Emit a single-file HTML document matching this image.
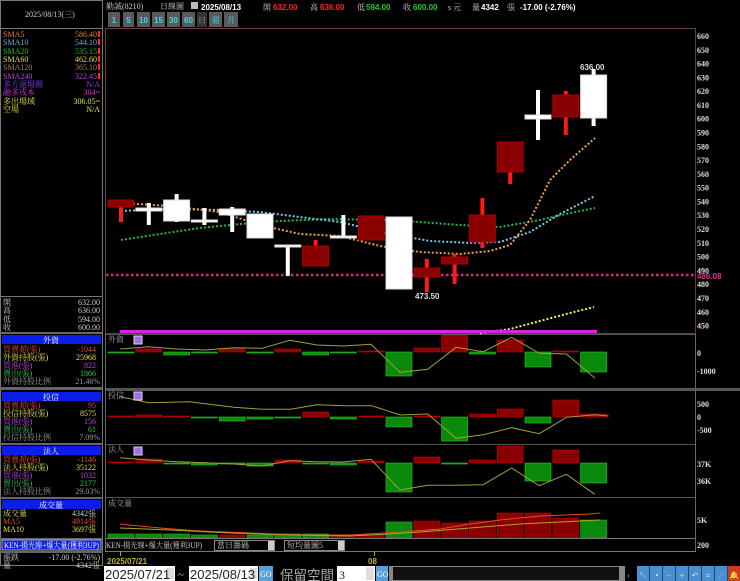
<!DOCTYPE html>
<html><head><meta charset="utf-8"><style>
html,body{margin:0;padding:0;background:#000;width:740px;height:581px;overflow:hidden}
svg{display:block}
text{font-family:"Liberation Serif","Noto Serif CJK SC",serif;font-size:8px}
.b{font-family:"Liberation Sans","Noto Sans CJK TC",sans-serif;font-weight:bold}
</style></head><body>
<svg id="s" width="740" height="581" viewBox="0 0 740 581" xmlns="http://www.w3.org/2000/svg">
<rect width="740" height="581" fill="#000"/>
<rect x="0.5" y="0.5" width="102" height="565" fill="none" stroke="#777"/>
<line x1="0" y1="28.5" x2="103" y2="28.5" stroke="#777"/>
<text x="25" y="17" fill="#ccc" font-size="9">2025/08/13(三)</text>
<g>
<text x="3" y="37" fill="#e08030">SMA5</text><text x="97" y="37" fill="#e08030" text-anchor="end">586.40</text>
<text x="3" y="45" fill="#6ab0e0">SMA10</text><text x="97" y="45" fill="#6ab0e0" text-anchor="end">544.10</text>
<text x="3" y="54" fill="#20c020">SMA20</text><text x="97" y="54" fill="#20c020" text-anchor="end">535.15</text>
<text x="3" y="62" fill="#e0e040">SMA60</text><text x="97" y="62" fill="#e0e040" text-anchor="end">462.60</text>
<text x="3" y="70" fill="#a08060">SMA120</text><text x="97" y="70" fill="#a08060" text-anchor="end">365.10</text>
<text x="3" y="79" fill="#c040e0">SMA240</text><text x="97" y="79" fill="#c040e0" text-anchor="end">322.45</text>
<text x="3" y="87" fill="#8040ff" font-size="7.5">多方迴場圈</text><text x="100" y="87" fill="#8040ff" text-anchor="end">N/A</text>
<text x="3" y="95" fill="#e030e0" font-size="7.5">融多成本</text><text x="100" y="95" fill="#e030e0" text-anchor="end">304=</text>
<text x="3" y="104" fill="#e0e040" font-size="7.5">多出場域</text><text x="100" y="104" fill="#e0e040" text-anchor="end">306.05=</text>
<text x="3" y="112" fill="#e0e040" font-size="7.5">空場</text><text x="100" y="112" fill="#e0e040" text-anchor="end">N/A</text>
<g fill="#f22"><rect x="98" y="31" width="2" height="6"/><rect x="98" y="39" width="2" height="6"/><rect x="98" y="48" width="2" height="6"/><rect x="98" y="56" width="2" height="6"/><rect x="98" y="64" width="2" height="6"/><rect x="98" y="73" width="2" height="6"/></g>
</g>
<line x1="0" y1="296.5" x2="103" y2="296.5" stroke="#777"/>
<text x="3" y="305" fill="#ccc">開</text><text x="100" y="305" fill="#ccc" text-anchor="end">632.00</text>
<text x="3" y="313" fill="#ccc">高</text><text x="100" y="313" fill="#ccc" text-anchor="end">636.00</text>
<text x="3" y="322" fill="#ccc">低</text><text x="100" y="322" fill="#ccc" text-anchor="end">594.00</text>
<text x="3" y="330" fill="#ccc">收</text><text x="100" y="330" fill="#ccc" text-anchor="end">600.00</text>
<rect x="0" y="332" width="103" height="2" fill="#666"/>
<rect x="2" y="335" width="99" height="9" fill="#0a1ee8"/><text x="51" y="343" fill="#fff" text-anchor="middle">外資</text>
<text x="3" y="352" fill="#e05030" font-size="7.5">買賣超(張)</text><text x="96" y="352" fill="#e05030" text-anchor="end">-1044</text>
<text x="3" y="360" fill="#e0e040" font-size="7.5">外資持股(張)</text><text x="96" y="360" fill="#e0e040" text-anchor="end">25968</text>
<text x="3" y="368" fill="#c040e0" font-size="7.5">買進(張)</text><text x="96" y="368" fill="#c040e0" text-anchor="end">822</text>
<text x="3" y="376" fill="#30c060" font-size="7.5">賣出(張)</text><text x="96" y="376" fill="#30c060" text-anchor="end">1866</text>
<text x="3" y="384" fill="#999" font-size="7.5">外資持股比例</text><text x="100" y="384" fill="#999" text-anchor="end">21.46%</text>
<rect x="0" y="387" width="103" height="3" fill="#666"/>
<rect x="2" y="392" width="99" height="9" fill="#0a1ee8"/><text x="51" y="400" fill="#fff" text-anchor="middle">投信</text>
<text x="3" y="408" fill="#e05030" font-size="7.5">買賣超(張)</text><text x="96" y="408" fill="#e05030" text-anchor="end">95</text>
<text x="3" y="416" fill="#e0e040" font-size="7.5">投信持股(張)</text><text x="96" y="416" fill="#e0e040" text-anchor="end">8575</text>
<text x="3" y="424" fill="#c040e0" font-size="7.5">買進(張)</text><text x="96" y="424" fill="#c040e0" text-anchor="end">156</text>
<text x="3" y="432" fill="#30c060" font-size="7.5">賣出(張)</text><text x="96" y="432" fill="#30c060" text-anchor="end">61</text>
<text x="3" y="440" fill="#999" font-size="7.5">投信持股比例</text><text x="100" y="440" fill="#999" text-anchor="end">7.09%</text>
<rect x="0" y="443" width="103" height="2" fill="#666"/>
<rect x="2" y="446" width="99" height="9" fill="#0a1ee8"/><text x="51" y="454" fill="#fff" text-anchor="middle">法人</text>
<text x="3" y="462" fill="#e05030" font-size="7.5">買賣超(張)</text><text x="96" y="462" fill="#e05030" text-anchor="end">-1146</text>
<text x="3" y="470" fill="#e0e040" font-size="7.5">法人持股(張)</text><text x="96" y="470" fill="#e0e040" text-anchor="end">35122</text>
<text x="3" y="478" fill="#c040e0" font-size="7.5">買進(張)</text><text x="96" y="478" fill="#c040e0" text-anchor="end">1032</text>
<text x="3" y="486" fill="#30c060" font-size="7.5">賣出(張)</text><text x="96" y="486" fill="#30c060" text-anchor="end">2177</text>
<text x="3" y="494" fill="#999" font-size="7.5">法人持股比例</text><text x="100" y="494" fill="#999" text-anchor="end">29.03%</text>
<rect x="0" y="497" width="103" height="2" fill="#666"/>
<rect x="2" y="500" width="99" height="9" fill="#0a1ee8"/><text x="51" y="508" fill="#fff" text-anchor="middle">成交量</text>
<text x="3" y="516" fill="#e0e040" font-size="7.5">成交量</text><text x="96" y="516" fill="#ccc" text-anchor="end">4342張</text>
<text x="3" y="524" fill="#e05030">MA5</text><text x="96" y="524" fill="#e05030" text-anchor="end">4914張</text>
<text x="3" y="532" fill="#e0e040">MA10</text><text x="96" y="532" fill="#e0e040" text-anchor="end">3697張</text>
<rect x="0" y="538" width="103" height="2" fill="#666"/>
<rect x="2" y="540" width="99" height="10" fill="#0a1ee8" stroke="#aaa"/><text x="4" y="548" fill="#fff" font-size="7" textLength="95" lengthAdjust="spacingAndGlyphs">KEN-揚光線+爆大量(獲利3UP)</text>
<rect x="0" y="551" width="103" height="2" fill="#666"/>
<text x="3" y="560" fill="#ccc">漲跌</text><text x="100" y="560" fill="#ccc" text-anchor="end">-17.00 (-2.76%)</text>
<text x="3" y="568" fill="#ccc">量</text><text x="100" y="568" fill="#ccc" text-anchor="end">4342張</text>

<text x="106" y="9" fill="#ccc">勤誠(8210)</text>
<text x="160" y="9" fill="#ccc">日線圖</text>
<rect x="191" y="2" width="7" height="7" fill="#bbb"/>
<text x="201" y="10" fill="#fff" class="b" font-size="10.5">2025/08/13</text>
<text x="263" y="10" fill="#ccc">開</text><text x="273" y="10" fill="#f22" class="b" font-size="10.5">632.00</text>
<text x="310" y="10" fill="#ccc">高</text><text x="320" y="10" fill="#f22" class="b" font-size="10.5">636.00</text>
<text x="357" y="10" fill="#ccc">低</text><text x="366" y="10" fill="#2c2" class="b" font-size="10.5">594.00</text>
<text x="403" y="10" fill="#ccc">收</text><text x="413" y="10" fill="#2c2" class="b" font-size="10.5">600.00</text>
<text x="448" y="10" fill="#ccc">s 元</text>
<text x="472" y="10" fill="#ccc">量</text><text x="481" y="10" fill="#fff" class="b" font-size="10.5">4342</text>
<text x="507" y="10" fill="#ccc">張</text><text x="520" y="10" fill="#fff" class="b" font-size="10.5">-17.00 (-2.76%)</text>
<g id="btns"></g>

<rect x="105.5" y="28.5" width="590" height="305" fill="none" stroke="#6a3a4a"/>
<g id="axis" fill="#ddd" class="b"></g>
<g id="g"></g>
<text x="580" y="70" fill="#ddd" class="b" font-size="9.5">636.00</text>
<text x="415" y="299" fill="#ddd" class="b" font-size="9.5">473.50</text>
<text x="697" y="279" fill="#e03090" class="b" font-size="8.5">486.08</text>
<rect x="105" y="388" width="635" height="3" fill="#555"/>
<line x1="105" y1="334.5" x2="696" y2="334.5" stroke="#555"/>
<line x1="105" y1="444.5" x2="696" y2="444.5" stroke="#555"/>
<line x1="105" y1="497.5" x2="696" y2="497.5" stroke="#555"/>
<line x1="105" y1="538.5" x2="696" y2="538.5" stroke="#777"/>
<line x1="105.5" y1="334" x2="105.5" y2="552" stroke="#666"/>
<line x1="695.5" y1="334" x2="695.5" y2="552" stroke="#666"/>
<text x="108" y="342" fill="#aaa" font-size="7.5">外資</text>
<text x="108" y="398" fill="#aaa" font-size="7.5">投信</text>
<text x="108" y="452" fill="#aaa" font-size="7.5">法人</text>
<text x="108" y="506" fill="#aaa" font-size="7.5">成交量</text>
<g fill="#a070e0" stroke="#e0d0ff" stroke-width="1"><rect x="134" y="336" width="8" height="8"/><rect x="134" y="392" width="8" height="8"/><rect x="134" y="447" width="8" height="8"/></g>
<g fill="#ddd" class="b" font-size="9.5">
<text x="697" y="356">0</text><text x="697" y="374">-1000</text>
<text x="697" y="407">500</text><text x="697" y="420">0</text><text x="697" y="433">-500</text>
<text x="697" y="467">37K</text><text x="697" y="484">36K</text>
<text x="697" y="523">5K</text><text x="697" y="548">200</text>
</g>
<line x1="105" y1="551.5" x2="696" y2="551.5" stroke="#777"/>
<text x="106" y="548" fill="#ccc" font-size="7" textLength="96" lengthAdjust="spacingAndGlyphs">KEN-揚光線+爆大量(獲利3UP)</text>
<rect x="214.5" y="540.5" width="60" height="10" fill="none" stroke="#888"/><rect x="268" y="541" width="6" height="9" fill="#ccc"/><text x="217" y="548" fill="#ccc" font-size="7">當日籌碼</text>
<rect x="284.5" y="540.5" width="60" height="10" fill="none" stroke="#888"/><rect x="338" y="541" width="6" height="9" fill="#ccc"/><text x="287" y="548" fill="#ccc" font-size="7">短均量圖5</text>
<line x1="120.5" y1="551" x2="120.5" y2="556" stroke="#aa0"/><line x1="374.5" y1="551" x2="374.5" y2="556" stroke="#aa0"/>
<text x="107" y="564" fill="#c8b020" class="b" font-size="9">2025/07/21</text>
<text x="368" y="564" fill="#c8b020" class="b" font-size="9">08</text>
<g>
<rect x="104" y="566" width="71" height="15" fill="#fff"/><rect x="167" y="568" width="7" height="11" fill="#ddd"/>
<text x="105" y="579" fill="#222" style="font-family:'Liberation Sans',sans-serif;font-size:13px">2025/07/21</text>
<text x="178" y="578" fill="#ccc" style="font-size:11px">~</text>
<rect x="189" y="566" width="69" height="15" fill="#fff"/><rect x="250" y="568" width="7" height="11" fill="#ddd"/>
<text x="190" y="579" fill="#222" style="font-family:'Liberation Sans',sans-serif;font-size:13px">2025/08/13</text>
<rect x="259" y="566" width="14" height="15" fill="#5aa0d8"/><text x="260" y="577" fill="#fff" font-size="7">GO</text>
<text x="280" y="580" fill="#aaa" style="font-family:'Noto Sans CJK TC',sans-serif;font-size:13.5px">保留空間</text>
<rect x="337" y="566" width="38" height="15" fill="#fff"/><rect x="366" y="567" width="8" height="13" fill="#ddd"/>
<text x="339" y="579" fill="#222" style="font-size:12px">3</text>
<rect x="376" y="566" width="12" height="15" fill="#5aa0d8"/><text x="377" y="577" fill="#fff" font-size="7">GO</text>
<rect x="389" y="566" width="236" height="15" fill="#888"/><rect x="393" y="567" width="226" height="13" fill="#111"/>
<g id="icons"></g>
</g>
</svg>
<script>
const NS="http://www.w3.org/2000/svg";
function el(p,t,a,txt){const e=document.createElementNS(NS,t);for(const k in a)e.setAttribute(k,a[k]);if(txt!==undefined)e.textContent=txt;p.appendChild(e);return e;}
const g=document.getElementById('g');
const bt=document.getElementById('btns');
[[108,12,'1'],[123,11,'5'],[137,13,'10'],[152,13,'15'],[167,13,'30'],[182,13,'60'],[197,10,'日'],[209,13,'週'],[224,14,'月']].forEach((b,i)=>{
 el(bt,'rect',{x:b[0],y:12,width:b[1],height:15,fill:i==6?'#333':'#5a5a5a'});
 el(bt,'text',{x:b[0]+b[1]/2,y:23,fill:i==6?'#999':'#3cd8e8','text-anchor':'middle','class':i<6?'b':'','font-size':i<6?'10':'8'},b[2]);
});
const ax=document.getElementById('axis');
const Y=p=>132+(590-p)*1.379;
for(let p=660;p>=450;p-=10){el(ax,'text',{x:697,y:Y(p)+3.5,'font-size':'9.5'},p);}
function dots(pts,c){el(g,'polyline',{points:pts,fill:'none',stroke:c,'stroke-width':2,'stroke-dasharray':'2 2'});}
el(g,'line',{x1:106,y1:275,x2:695,y2:275,stroke:'#e0208a','stroke-width':2.5,'stroke-dasharray':'2.5 2.5'});
dots("121,240 160,234 200,228 240,224 280,221 330,219 380,220 420,222 460,225 500,227 540,220 570,213 595,208","#22b844");
dots("121,211 170,209 220,210 260,212 300,217 340,222 390,234 430,241 470,243 500,242 530,232 560,214 595,196","#7ac8f0");
dots("121,203 170,206 220,212 260,225 300,234 340,236 380,246 420,252 460,254 490,251 510,245 530,220 550,180 570,160 595,138","#f0a040");
dots("480,333 510,329 540,321 570,313 594,307","#f0f040");
el(g,'line',{x1:120,y1:331.5,x2:597,y2:331.5,stroke:'#e020e0','stroke-width':3});
const C=[[0,200,207,200,222,'r'],[1,208,211,203,225,'w'],[2,200,221,194,222,'w'],[3,220,222,208,225,'w'],[4,209,215,207,232,'w'],[5,214,238,214,238,'w'],[6,245,246,245,276,'w'],[7,246,266,240,266,'r'],[8,236,238,215,238,'w'],[9,216,240,216,240,'r'],[10,217,289,217,289,'w'],[11,268,277,259,292,'r'],[12,257,264,254,284,'r'],[13,215,242,198,248,'r'],[14,142,172,142,184,'r'],[15,115,119,90,140,'w'],[16,95,117,91,135,'r'],[17,75,118,69,126,'w']];
C.forEach(c=>{const x=108+c[0]*27.8,cx=x+13;
 el(g,'rect',{x:cx-2,y:c[3],width:4,height:c[4]-c[3],fill:c[5]=='r'?'#ff1a1a':'#fff'});
 el(g,'rect',{x:x,y:c[1],width:26,height:Math.max(2,c[2]-c[1]),fill:c[5]=='r'?'#8a0000':'#fff',stroke:c[5]=='r'?'#a00':'#ddd'});
});
function bars(zero,arr){arr.forEach((v,i)=>{const x=108+i*27.8;const h=Math.abs(v)||1.5;
 el(g,'rect',{x:x,y:v>0?zero-h:zero,width:26,height:h,fill:v>0?'#8a0000':'#0a8a0a',stroke:v>0?'#c00':'#2c2','stroke-width':0.6});});}
bars(352,[-1,3,-3,-1,3,-1,3,-3,-1,1,-24,4,17,-2,12,-15,1,-20]);
bars(417,[1,2,1,-1,-4,-2,-1,5,-2,1,-10,1,-24,3,8,-6,17,3]);
bars(463,[1,4,-1,-2,-1,-3,3,-1,-2,2,-29,6,-1,3,17,-18,13,-20]);
const vt=[-534,-534,-534,-535,535,-535,-534,-534,535,535,-522,521,523,521,513,513,518,-520];
vt.forEach((t,i)=>{const x=108+i*27.8,top=Math.abs(t);el(g,'rect',{x:x,y:top,width:26,height:538-top,fill:t>0?'#8a0000':'#0a8a0a',stroke:t>0?'#b00':'#2b2','stroke-width':0.6});});
function line(pts){el(g,'polyline',{points:pts.map(p=>(104+p[0]*0.4056).toFixed(1)+','+(330+p[1]/3).toFixed(1)).join(' '),fill:'none',stroke:'#a0a030','stroke-width':1});}
line([[40,57],[110,50],[180,57],[250,60],[320,53],[390,55],[458,31],[525,45],[590,48],[658,43],[730,127],[798,118],[868,52],[935,65],[1005,22],[1073,70],[1140,72],[1210,144]]);
line([[40,200],[110,218],[210,215],[320,232],[390,238],[460,238],[525,224],[590,227],[660,227],[730,255],[798,252],[868,325],[935,314],[1005,293],[1073,311],[1140,262],[1210,254],[1244,258]]);
line([[40,383],[110,390],[180,395],[250,398],[320,402],[390,408],[458,392],[525,395],[590,396],[658,388],[730,480],[798,466],[868,466],[935,464],[1005,414],[1073,467],[1140,433],[1210,493]]);
el(g,'polyline',{points:"120,524 160,528 200,531 250,533 300,535 350,535 400,532 440,529 470,524 500,520 540,516 590,514 600,513",fill:'none',stroke:'#e05020','stroke-width':1});
el(g,'polyline',{points:"120,528 170,530 230,533 290,535 350,536 390,534 420,532 470,528 520,524 560,522 600,520",fill:'none',stroke:'#b0a030','stroke-width':1});
const ic=document.getElementById('icons');
el(ic,'text',{x:627,y:578,fill:'#ccc','font-size':'10'},'›');
const cols=['#4a90d0','#4a90d0','#4a90d0','#4a90d0','#4a90d0','#4a90d0','#4a90d0','#d03a20'];
const glyph=['↖','◔','−','+','↶','⌗','⁄','🔔'];
for(let i=0;i<8;i++){const x=637+i*13;el(ic,'rect',{x:x,y:566,width:12.5,height:15,fill:cols[i]});
 el(ic,'text',{x:x+6,y:578,fill:i==3?'#ff0':(i==1?'#fff':'#cde'),'text-anchor':'middle','font-size':'11'},glyph[i]);}
</script>
</body></html>
